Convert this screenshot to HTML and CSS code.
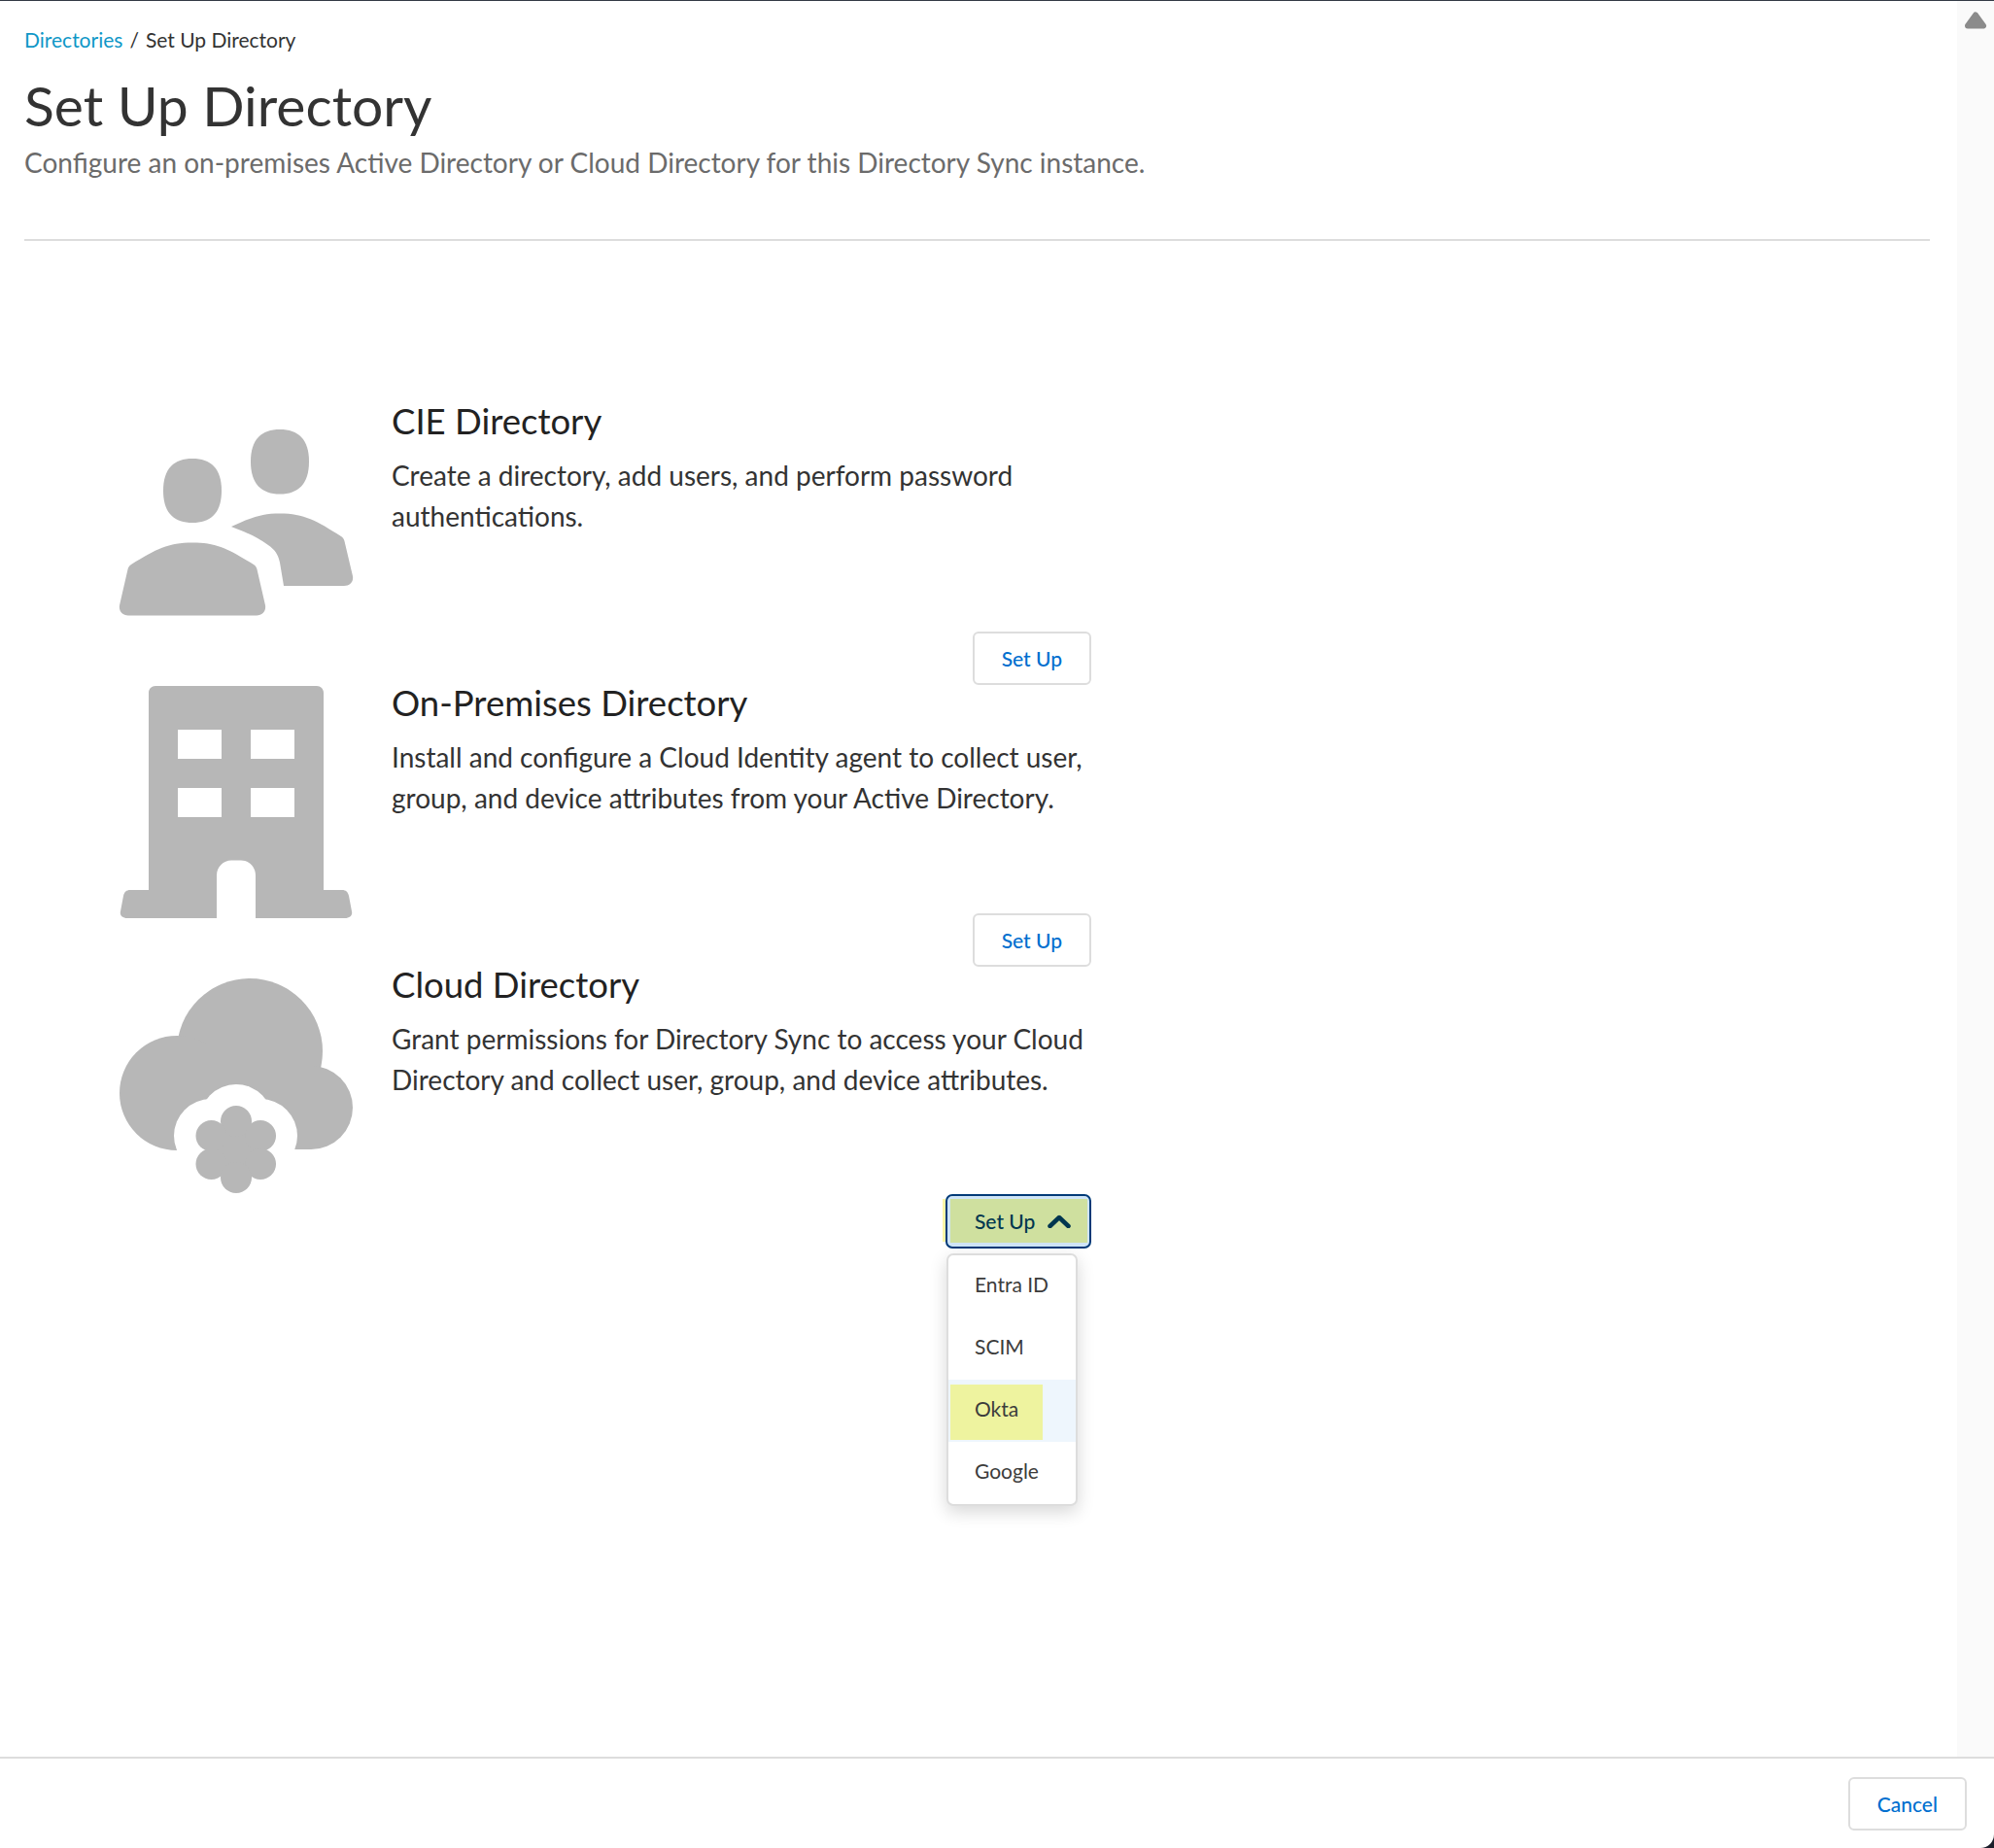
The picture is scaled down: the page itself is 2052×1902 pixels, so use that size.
FILE: index.html
```html
<!DOCTYPE html>
<html lang="en">
<head>
<meta charset="utf-8">
<title>Set Up Directory</title>
<link rel="stylesheet" href="styles.css">
</head>
<body>
<div class="app">
  <div class="main">
    <div class="content">
      <nav class="crumbs"><a class="crumb-link" href="#">Directories</a><span class="crumb-sep">/</span><span>Set Up Directory</span></nav>
      <h1 class="title">Set Up Directory</h1>
      <p class="subtitle">Configure an on-premises Active Directory or Cloud Directory for this Directory Sync instance.</p>
      <hr class="divider">
      <section class="rows">
        <article class="row">
          <svg class="icon" viewBox="0 10 240 240" aria-hidden="true">
            <path d="M45 100C45 77 56 67 75 67C94 67 105 77 105 100C105 123 94 133 75 133C56 133 45 123 45 100Z"/>
            <path d="M75 153.500C100 153.500 112 160 138 176C140 177 141 179 141.500 181L150 218C151 224 147 228.500 141 228.500H9C3 228.500 -1 224 0 218L8.500 181C9 179 10 177 12 176C38 160 50 153.500 75 153.500Z"/>
            <path d="M135 70C135 47 146 37 165 37C184 37 195 47 195 70C195 93 184 103.500 165 103.500C146 103.500 135 93 135 70Z"/>
            <path d="M115 137C137 127 147 123.500 165 123.500C190 123.500 203 131 228 147C230 148 231 150 231.500 152L240 188C241 194 237 198 231 198H169L165 174C163 165 160 161 153 156C141 147 130 143 115 137Z"/>
          </svg>
          <div class="body">
            <div class="text">
              <h2 class="heading">CIE Directory</h2>
              <p class="desc">Create a directory, add users, and perform password authentications.</p>
            </div>
            <div class="actions"><button class="btn">Set Up</button></div>
          </div>
        </article>
        <article class="row">
          <svg class="icon" viewBox="0 10 240 240" aria-hidden="true">
            <path fill-rule="evenodd" d="M37 11H203C207 11 210 14 210 18V221H229C233 221 235 223 236 227L239 243C240 247 237 250 232 250H140V206C140 197 133 190.500 125 190.500H115C107 190.500 100 197 100 206V250H8C3 250 0 247 1 243L4 227C5 223 7 221 11 221H30V18C30 14 33 11 37 11ZM60 56V86H105V56ZM135 56V86H180V56ZM60 116V146H105V116ZM135 116V146H180V116Z"/>
          </svg>
          <div class="body">
            <div class="text">
              <h2 class="heading">On-Premises Directory</h2>
              <p class="desc">Install and configure a Cloud Identity agent to collect user, group, and device attributes from your Active Directory.</p>
            </div>
            <div class="actions"><button class="btn">Set Up</button></div>
          </div>
        </article>
        <article class="row">
          <svg class="icon" viewBox="0 10 240 240" aria-hidden="true">
            <circle cx="134" cy="97" r="75"/>
            <circle cx="59" cy="140" r="59"/>
            <circle cx="197" cy="155" r="43"/>
            <rect x="59" y="100" width="138" height="98"/>
            <g class="cutout">
              <circle cx="120" cy="169" r="38"/>
              <circle cx="94" cy="184" r="38"/>
              <circle cx="145" cy="184" r="38"/>
              <rect x="60" y="198" width="120" height="50"/>
            </g>
            <circle cx="120" cy="198" r="25"/>
            <circle cx="120" cy="169" r="16"/>
            <circle cx="94.500" cy="184" r="16"/>
            <circle cx="145" cy="184" r="16"/>
            <circle cx="94.500" cy="213" r="16"/>
            <circle cx="145" cy="213" r="16"/>
            <circle cx="120" cy="227" r="16"/>
          </svg>
          <div class="body">
            <div class="text">
              <h2 class="heading">Cloud Directory</h2>
              <p class="desc">Grant permissions for Directory Sync to access your Cloud Directory and collect user, group, and device attributes.</p>
            </div>
            <div class="actions">
              <div class="dropdown">
                <button class="btn-open"><span class="btn-open-inner">Set Up<svg class="chev" viewBox="0 0 24 14" aria-hidden="true"><path d="M2.500 12L12 3L21.500 12"/></svg></span></button>
                <ul class="menu">
                  <li class="menu-item">Entra ID</li>
                  <li class="menu-item">SCIM</li>
                  <li class="menu-item is-hover"><span class="mark">Okta</span></li>
                  <li class="menu-item">Google</li>
                </ul>
              </div>
            </div>
          </div>
        </article>
      </section>
    </div>
    <aside class="scrollbar">
      <svg class="scroll-up" viewBox="0 0 24 18" aria-hidden="true"><path d="M12 3.500L20 14.500H4Z"/></svg>
    </aside>
  </div>
  <footer class="footer"><button class="btn">Cancel</button></footer>
</div>
</body>
</html>
```

FILE: styles.css
```css
* { box-sizing: border-box; }
html, body { margin: 0; height: 100%; }
body {
  background: #1b1f2b;
  font-family: Lato, "Open Sans", sans-serif;
  color: #333;
}
.app {
  height: 1902px;
  display: flex;
  flex-direction: column;
  background: #fff;
  border-top: 1px solid #333a45;
  border-bottom-right-radius: 14px;
  overflow: hidden;
}
.main { flex: 1; display: flex; min-height: 0; }
.content { flex: 1; padding: 27px 28px 0 25px; }
.scrollbar {
  width: 38px;
  background: #fafafa;
  padding: 11px 0 0 7px;
}
.scroll-up { display: block; width: 24px; height: 18px; }
.scroll-up path { fill: #8b8b8b; stroke: #8b8b8b; stroke-width: 6; stroke-linejoin: round; }
.crumbs { font-size: 21px; line-height: 26px; color: #333; display: flex; }
.crumb-link { color: #0f97c7; text-decoration: none; }
.crumb-sep { margin: 0 7px; }
.title { margin: 19px 0 0; font-size: 57px; line-height: 70px; font-weight: 400; color: #333; }
.subtitle { margin: 6px 0 0; font-size: 28px; line-height: 36px; color: #6b6b6b; }
.divider { margin: 61px 0 0; border: 0; border-top: 2px solid #ddd; }
.rows { margin-top: 167px; padding-left: 98px; }
.row { display: flex; gap: 40px; height: 290px; }
.icon { width: 240px; height: 240px; flex: none; overflow: visible; fill: #b7b7b7; }
.cutout { fill: #fff; }
.body { width: 720px; display: flex; flex-direction: column; }
.text { height: 235px; }
.heading { margin: 0; font-size: 36.500px; line-height: 36px; font-weight: 400; color: #222; }
.desc { margin: 17px 0 0; font-size: 28px; line-height: 42px; color: #333; }
.actions { display: flex; justify-content: flex-end; }
.btn {
  height: 55px;
  padding: 0 28px;
  background: #fff;
  border: 2px solid #ddd;
  border-radius: 6px;
  font: 500 21px Lato, sans-serif;
  color: #006fcf;
}
.dropdown { position: relative; }
.dropdown::before {
  content: "";
  position: absolute;
  left: -3px;
  top: 5px;
  width: 3px;
  height: 44px;
  background: #fdf6a6;
}
.btn-open {
  display: block;
  width: 150px;
  height: 56px;
  padding: 3px 2px 4px 3px;
  background: #cfe5f7;
  border: 2px solid #003a78;
  border-radius: 7px;
  font: 500 21px Lato, sans-serif;
  color: #00374f;
}
.btn-open-inner {
  display: flex;
  align-items: center;
  height: 100%;
  padding-left: 25px;
  background: #cfe09f;
}
.chev { width: 24px; height: 14px; margin-left: 13px; fill: none; stroke: #00364f; stroke-width: 4.500; stroke-linecap: round; stroke-linejoin: round; }
.menu {
  position: absolute;
  top: 61px;
  left: 1px;
  width: 135px;
  margin: 0;
  padding: 0;
  list-style: none;
  background: #fff;
  border: 2px solid #ddd;
  border-radius: 7px;
  box-shadow: 0 6px 18px rgba(0, 0, 0, .16);
  overflow: hidden;
  font-size: 21px;
  color: #3c3c3c;
}
.menu-item { height: 64px; padding-left: 27px; line-height: 60px; position: relative; }
.is-hover { background: #eef6fd; }
.mark {
  display: block;
  width: 95px;
  height: 57px;
  margin-left: -25px;
  padding-left: 25px;
  position: relative;
  top: 5px;
  line-height: 50px;
  background: #eef39f;
}
.footer {
  height: 94px;
  flex: none;
  border-top: 2px solid #ddd;
  padding: 19px 28px 0 0;
  display: flex;
  justify-content: flex-end;
  align-items: flex-start;
}
```
